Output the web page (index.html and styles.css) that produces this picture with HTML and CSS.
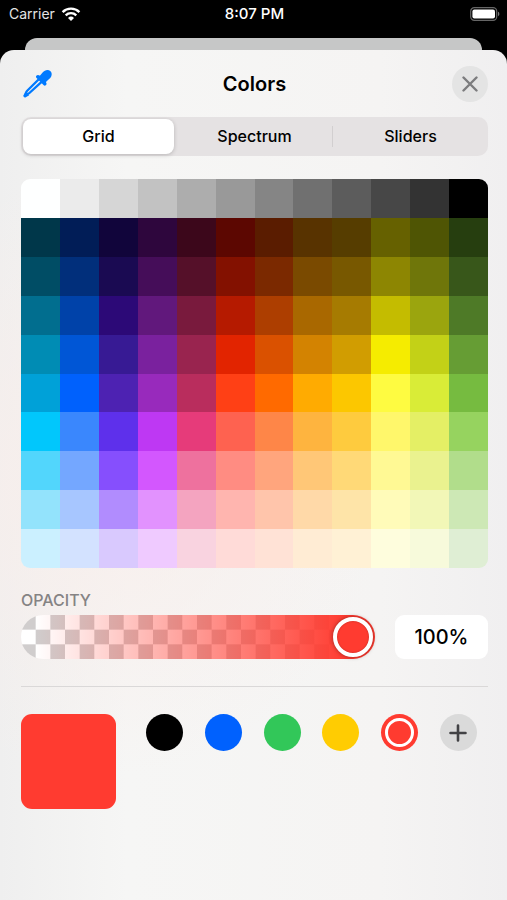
FILE: index.html
```html
<!DOCTYPE html>
<html lang="en">
<head>
    <meta charset="UTF-8">
    <meta name="viewport" content="width=device-width, initial-scale=1.0">
    <title>Colors</title>
    <link rel="stylesheet" href="styles.css">
</head>
<body>
    <div class="status-bar">
        <div class="carrier">
            <span>Carrier</span>
            <svg width="20" height="14" viewBox="0 0 20 14" aria-hidden="true">
                <g fill="none" stroke="#fff" stroke-width="2.4">
                    <path d="M1.6 5.1a12 12 0 0 1 16.8 0"/>
                    <path d="M4.7 8.3a7.6 7.6 0 0 1 10.6 0"/>
                </g>
                <path d="M10 14 7 10.9a4.3 4.3 0 0 1 6 0z" fill="#fff"/>
            </svg>
        </div>
        <div class="clock">8:07 PM</div>
        <svg class="battery" width="30" height="14" viewBox="0 0 30 14" aria-hidden="true">
            <rect x=".7" y=".7" width="26" height="12.6" rx="3.6" fill="none" stroke="#666" stroke-width="1.2"/>
            <rect x="2.4" y="2.4" width="22.6" height="9.2" rx="2" fill="#fff"/>
            <path d="M28 4.8c1.8.6 1.8 3.8 0 4.4z" fill="#777"/>
        </svg>
    </div>

    <div class="back-sheet"></div>

    <main class="sheet">
        <header class="header">
            <button class="eyedropper" aria-label="Pick a color from the screen">
                <svg width="32" height="32" viewBox="0 0 32 32" aria-hidden="true">
                    <path d="M17.800 11.200 6.200 22.800c-1.200 1.200-1.400 3-2.600 4.800 1.800-1.200 3.600-1.400 4.800-2.600L20.600 13.800" fill="none" stroke="#007aff" stroke-width="2.300" stroke-linejoin="round"/>
                    <path d="M2.800 27.200 4.800 24 8.200 27.200 4.800 29.200C3.400 30 2 28.600 2.800 27.200z" fill="#007aff"/>
                    <path d="M21.600 4.600c2.200-2.900 5.800-3.400 7.900-1.400 2 2 1.500 5.700-1.400 7.900l-2.700 2.300c-.5.500-.5.800-.2 1.300.6.900.5 1.700-.2 2.400-.8.800-1.700.8-2.500 0L15.600 10.100c-.8-.8-.8-1.700 0-2.500.7-.7 1.500-.8 2.400-.2.500.3.900.3 1.300-.1z" fill="#007aff"/>
                </svg>
            </button>
            <h1>Colors</h1>
            <button class="close" aria-label="Close">
                <svg width="16" height="16" viewBox="0 0 16 16" aria-hidden="true">
                    <path d="M1.500 1.500l13 13M14.500 1.500l-13 13" stroke="#7c7c7e" stroke-width="2.400" stroke-linecap="round"/>
                </svg>
            </button>
        </header>

        <div class="segments">
            <label class="segment"><input type="radio" name="mode" checked>Grid</label>
            <span class="separator hidden"></span>
            <label class="segment"><input type="radio" name="mode">Spectrum</label>
            <span class="separator"></span>
            <label class="segment"><input type="radio" name="mode">Sliders</label>
        </div>

        <div class="color-grid" id="colorGrid"></div>

        <label class="opacity-label" for="opacity">OPACITY</label>
        <div class="opacity-row">
            <input type="range" id="opacity" class="opacity-slider" min="0" max="100" value="100">
            <input type="text" id="opacityValue" class="opacity-value" value="100%" aria-label="Opacity value">
        </div>

        <div class="saved">
            <div class="current-color"></div>
            <div class="swatches">
                <button class="swatch black" aria-label="Black"></button>
                <button class="swatch blue" aria-label="Blue"></button>
                <button class="swatch green" aria-label="Green"></button>
                <button class="swatch yellow" aria-label="Yellow"></button>
                <button class="swatch red selected" aria-label="Red"></button>
                <button class="swatch add" aria-label="Add color">
                    <svg width="18" height="18" viewBox="0 0 18 18" aria-hidden="true">
                        <path d="M9 1.500v15M1.500 9h15" stroke="#424245" stroke-width="2.600" stroke-linecap="round"/>
                    </svg>
                </button>
            </div>
        </div>
    </main>

    <script src="main.js"></script>
</body>
</html>
```
FILE: styles.css
```css
*,
*::before {
    box-sizing: border-box;
}

body {
    margin: 0;
    min-height: 100vh;
    display: flex;
    flex-direction: column;
    background: #000;
    color: #000;
    font-family: Inter, "Liberation Sans", sans-serif;
}

button {
    border: none;
    padding: 0;
    background: none;
    cursor: pointer;
}

/* Status bar */
.status-bar {
    display: grid;
    grid-template-columns: 1fr auto 1fr;
    align-items: center;
    height: 27px;
    padding: 0 7px 0 9px;
    margin-bottom: 11px;
    color: #fff;
    font-size: 14px;
}

.carrier {
    display: flex;
    align-items: center;
    gap: 6px;
    color: #e4e4e4;
}

.clock {
    font-size: 15px;
    font-weight: 500;
}

.battery {
    justify-self: end;
}

/* Edge of the page behind the sheet */
.back-sheet {
    height: 24px;
    margin: 0 25px -12px;
    border-radius: 12px 12px 0 0;
    background: #c6c7c7;
}

.sheet {
    flex: 1;
    position: relative;
    padding: 16px 19px 20px 21px;
    border-radius: 14px 14px 0 0;
    background:
        radial-gradient(ellipse at 20% 50%, #f8eeeb 0%, transparent 50%),
        linear-gradient(90deg, #efefef 0%, #f6f6f5 25%, #f5f4f3 75%, #f0eff0 100%);
}

/* Title row */
.header {
    display: grid;
    grid-template-columns: 36px 1fr 36px;
    align-items: center;
    height: 36px;
    margin-bottom: 15px;
}

.header h1 {
    margin: 0;
    font-size: 20px;
    font-weight: 600;
    text-align: center;
}

.eyedropper {
    width: 32px;
    height: 32px;
}

.eyedropper svg {
    display: block;
}

.close {
    display: flex;
    align-items: center;
    justify-content: center;
    width: 36px;
    height: 36px;
    border-radius: 50%;
    background: #e4e4e4;
}

/* Grid / Spectrum / Sliders */
.segments {
    display: grid;
    grid-template-columns: 1fr 1px 1fr 1px 1fr;
    align-items: center;
    gap: 2px;
    height: 39px;
    padding: 2px;
    margin-bottom: 23px;
    border-radius: 10px;
    background: #e5e2e3;
}

.segment {
    height: 35px;
    border-radius: 8px;
    font-size: 16px;
    font-weight: 500;
    line-height: 35px;
    text-align: center;
    cursor: pointer;
}

.segment input {
    position: absolute;
    opacity: 0;
}

.segment:has(input:checked) {
    background: #fff;
    box-shadow: 0 1px 4px rgba(0, 0, 0, 0.2);
}

.separator {
    height: 21px;
    background: #d2cfd0;
}

.separator.hidden {
    visibility: hidden;
}

/* Palette */
.color-grid {
    display: grid;
    grid-template-columns: repeat(12, 1fr);
    grid-template-rows: repeat(10, 1fr);
    aspect-ratio: 12 / 10;
    border-radius: 9px;
    overflow: hidden;
}

/* Opacity */
.opacity-label {
    display: block;
    margin: 20px 0 3px;
    color: #858384;
    font-size: 16px;
    font-weight: 500;
    line-height: 24px;
}

.opacity-row {
    display: flex;
    gap: 20px;
    padding-bottom: 27px;
    border-bottom: 1px solid #dad8d8;
}

.opacity-slider {
    -webkit-appearance: none;
    appearance: none;
    flex: 1;
    min-width: 0;
    height: 44px;
    margin: 0;
    padding: 0 2px;
    border-radius: 22px;
    background:
        linear-gradient(90deg, rgba(255, 59, 48, 0) 4%, #ff3b30 92%),
        conic-gradient(#d0cdcd 25%, #fff 0 50%, #d0cdcd 0 75%, #fff 0) calc(-44px / 3) 0 / calc(88px / 3) calc(88px / 3);
}

.opacity-slider::-webkit-slider-thumb {
    -webkit-appearance: none;
    width: 40px;
    height: 40px;
    border: 4px solid #fff;
    border-radius: 50%;
    background: #ff3b30;
    box-shadow: 0 0 4px rgba(0, 0, 0, 0.4), inset 0 0 2px rgba(0, 0, 0, 0.3);
}

.opacity-value {
    width: 93px;
    height: 44px;
    padding: 0;
    border: none;
    border-radius: 9px;
    background: #fff;
    color: #000;
    font-family: inherit;
    font-size: 20px;
    font-weight: 500;
    text-align: center;
}

/* Current and saved colors */
.saved {
    display: flex;
    gap: 30px;
    padding: 27px 11px 0 0;
}

.current-color {
    width: 95px;
    height: 95px;
    border-radius: 11px;
    background: #ff3b30;
}

.swatches {
    flex: 1;
    display: flex;
    justify-content: space-between;
}

.swatch {
    display: flex;
    align-items: center;
    justify-content: center;
    width: 37px;
    height: 37px;
    border-radius: 50%;
}

.black { background: #000; }
.blue { background: #0061fe; }
.green { background: #32c759; }
.yellow { background: #ffcc02; }
.red { background: #ff3b30; }
.add { background: #dadada; }

.selected::before {
    content: "";
    width: 29px;
    height: 29px;
    border: 3px solid #fff;
    border-radius: 50%;
}
```
FILE: main.js
```javascript
// One string per palette row, grays first, then dark to light
const rows = [
    "feffff ebebeb d6d6d6 c2c2c2 adadad 999999 858585 707070 5c5c5c 474747 333333 000000",
    "00374a 011d57 11053b 2e063d 3c071b 5c0701 5a1c00 583300 563d00 666100 4f5504 263e0f",
    "004d65 012f7b 1a0a52 450d59 551029 831100 7b2900 7a4a00 785800 8d8602 6f760a 38571a",
    "016e8f 0042a9 2c0977 61187c 791a3d b51a00 ad3e00 a96800 a67b01 c4bc00 9ba50e 4e7a27",
    "008cb4 0056d6 371a94 7a219e 99244f e22400 da5100 d38301 d19d01 f5ec00 c3d117 669d34",
    "00a1d8 0061fd 4d22b2 982abc b92d5d ff4015 ff6a00 ffab01 fcc700 fefb41 d9ec37 76bb40",
    "01c7fc 3a87fd 5e30eb be38f3 e63b7a fe6250 fe8648 feb43f fecb3e fff76b e4ef65 96d35f",
    "52d6fc 74a7ff 864ffd d357fe ee719e ff8c82 ffa57d ffc777 ffd977 fff994 eaf28f b1dd8b",
    "93e3fc a7c6ff b18cfe e292fe f4a4c0 ffb5af ffc5ab ffd9a8 fee4a8 fffbb9 f2f7b7 cde8b5",
    "cbf0ff d3e2ff d9c9fe efcaff f9d3e0 ffdbd8 ffe2d6 ffecd4 fff1d5 fefddd f7fadb dfeed4"
];

const colorGrid = document.getElementById("colorGrid");
const currentColor = document.querySelector(".current-color");

rows.join(" ").split(" ").forEach((hex) => {
    const cell = document.createElement("button");
    cell.style.background = "#" + hex;
    cell.setAttribute("aria-label", "#" + hex);
    cell.onclick = () => {
        currentColor.style.background = "#" + hex;
    };
    colorGrid.appendChild(cell);
});

const opacity = document.getElementById("opacity");
opacity.addEventListener("input", () => {
    document.getElementById("opacityValue").value = opacity.value + "%";
});
```
